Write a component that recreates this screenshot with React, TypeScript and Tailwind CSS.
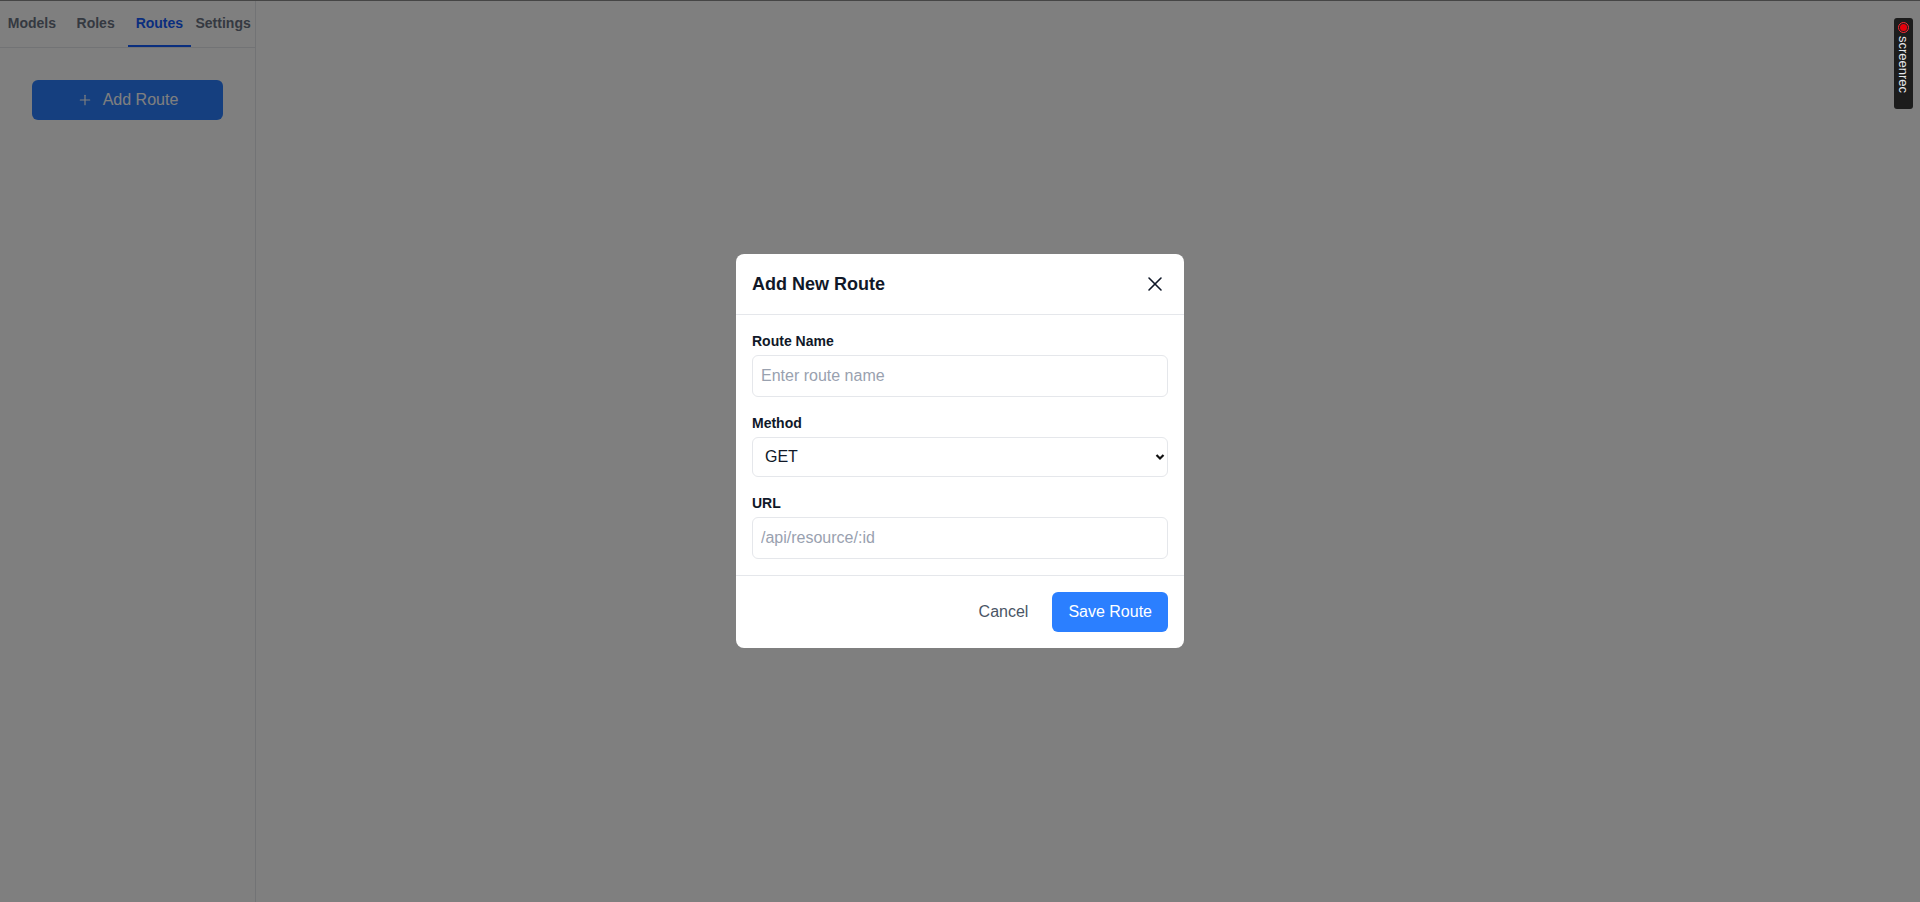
import React, { useState } from "react";
import { X, Plus } from "lucide-react";

const tabs = ["Models", "Roles", "Routes", "Settings"];
const methods = ["GET", "POST", "PUT", "PATCH", "DELETE"];

function Field({ label, children }: { label: string; children: React.ReactNode }) {
  return (
    <div>
      <label className="block text-sm font-semibold text-gray-900 mb-1">{label}</label>
      {children}
    </div>
  );
}

export default function App() {
  const [activeTab, setActiveTab] = useState("Routes");
  const [open, setOpen] = useState(true);
  const [name, setName] = useState("");
  const [method, setMethod] = useState("GET");
  const [url, setUrl] = useState("");

  return (
    <div className="h-screen flex bg-white border-t border-[#8a8a8a] font-['Liberation_Sans',Arial,sans-serif] text-gray-900">
      {/* Sidebar */}
      <aside className="w-64 shrink-0 border-r border-gray-200 flex flex-col">
        <nav className="flex border-b border-gray-200">
          {tabs.map((t) => (
            <button
              key={t}
              onClick={() => setActiveTab(t)}
              className={`flex-1 py-3 text-sm font-semibold text-center border-b-2 ${
                activeTab === t ? "text-blue-600 border-blue-600" : "text-gray-500 border-transparent"
              }`}
            >
              {t}
            </button>
          ))}
        </nav>
        <div className="p-8">
          <button
            onClick={() => setOpen(true)}
            className="w-full h-10 flex items-center justify-center gap-2.5 bg-blue-500 text-white rounded-md text-base"
          >
            <Plus size={16} strokeWidth={1.75} />
            <span>Add Route</span>
          </button>
        </div>
      </aside>

      <main className="flex-1" />

      {/* Modal */}
      {open && (
        <div className="fixed inset-0 bg-black/50 flex items-center justify-center">
          <div className="w-[448px] bg-white rounded-lg">
            <div className="flex items-center justify-between px-4 py-4 border-b border-gray-200">
              <h2 className="text-lg font-semibold text-gray-900">Add New Route</h2>
              <button onClick={() => setOpen(false)} className="text-gray-900 mr-[1px]">
                <X size={24} strokeWidth={1.6} />
              </button>
            </div>

            <div className="p-4 space-y-4">
              <Field label="Route Name">
                <input
                  value={name}
                  onChange={(e) => setName(e.target.value)}
                  placeholder="Enter route name"
                  className="w-full h-[42px] px-2 border border-gray-200 rounded-md text-base placeholder:text-gray-400 outline-none"
                />
              </Field>
              <Field label="Method">
                <div className="relative">
                  <select
                    value={method}
                    onChange={(e) => setMethod(e.target.value)}
                    className="w-full h-10 pl-3 pr-8 border border-gray-200 rounded-md text-base bg-white appearance-none outline-none"
                  >
                    {methods.map((m) => (
                      <option key={m}>{m}</option>
                    ))}
                  </select>
                  <svg
                    className="absolute right-[3px] top-1/2 -translate-y-1/2 pointer-events-none"
                    width="10"
                    height="7"
                    viewBox="0 0 10 7"
                    fill="none"
                    stroke="#111"
                    strokeWidth="2.2"
                  >
                    <path d="M1.5 1.5l3.5 3.5 3.5-3.5" />
                  </svg>
                </div>
              </Field>
              <Field label="URL">
                <input
                  value={url}
                  onChange={(e) => setUrl(e.target.value)}
                  placeholder="/api/resource/:id"
                  className="w-full h-[42px] px-2 border border-gray-200 rounded-md text-base placeholder:text-gray-400 outline-none"
                />
              </Field>
            </div>

            <div className="flex justify-end gap-2 p-4 border-t border-gray-200">
              <button onClick={() => setOpen(false)} className="h-10 px-4 text-base text-gray-600 rounded-md">
                Cancel
              </button>
              <button className="h-10 px-4 text-base text-white bg-blue-500 rounded-md">Save Route</button>
            </div>
          </div>
        </div>
      )}

      {/* Recorder badge */}
      <div className="fixed top-[18px] right-[7px] w-[19px] h-[91px] bg-[#1c1c1c] rounded-[3px] flex flex-col items-center pt-[4px] z-50">
        <div className="w-[11px] h-[11px] rounded-full border border-red-500 flex items-center justify-center">
          <div className="w-[7px] h-[7px] rounded-full bg-red-600" />
        </div>
        <span className="mt-[3px] text-[13px] leading-none text-gray-200 [writing-mode:vertical-rl]">screenrec</span>
      </div>
    </div>
  );
}
